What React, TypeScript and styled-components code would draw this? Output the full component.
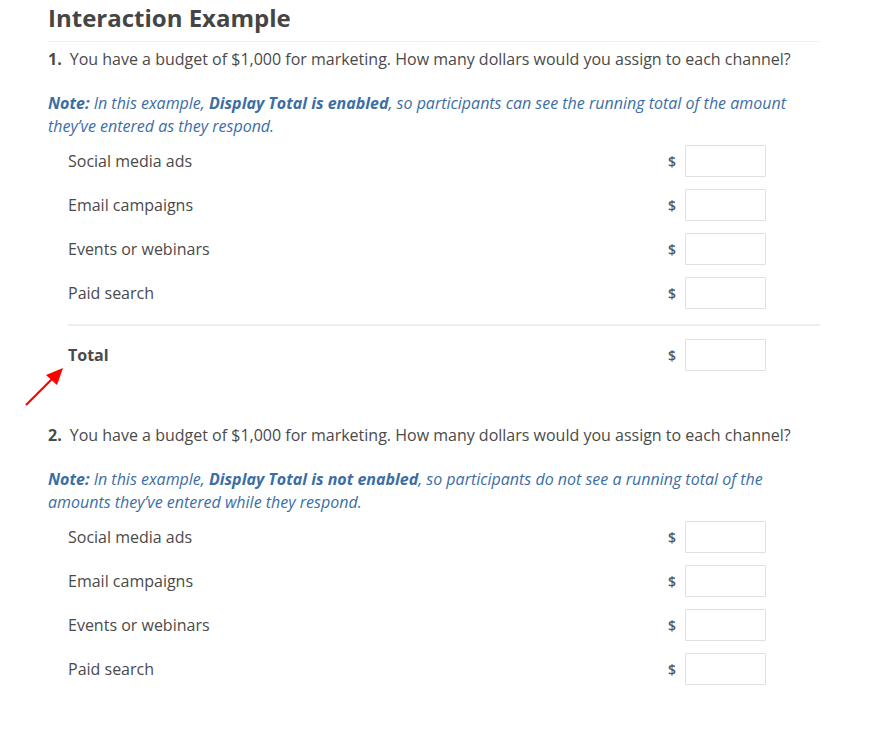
import React from 'react';
import styled, { createGlobalStyle } from 'styled-components';

const GlobalStyle = createGlobalStyle`
  body {
    margin: 0;
    background: #fff;
    font-family: "Open Sans", "Liberation Sans", sans-serif;
    color: #4a4a4a;
  }
`;

const Page = styled.div`
  width: 772px;
  padding: 0 0 40px 48px;
`;

const Heading = styled.h1`
  margin: 0;
  padding: 3px 0 8px;
  font-size: 24px;
  line-height: 30px;
  font-weight: 700;
  color: #454545;
  border-bottom: 1px solid #f2f2f2;
`;

const Question = styled.p<{ $top: number }>`
  margin: ${(p) => p.$top}px 0 0;
  font-size: 16px;
  line-height: 22px;
  color: #4a4a4a;
  b {
    font-weight: 700;
    margin-right: 8px;
  }
`;

const Note = styled.p`
  margin: 22px 0 0;
  font-size: 16px;
  line-height: 22.5px;
  font-style: italic;
  color: #3b6ea5;
  b {
    font-weight: 700;
  }
`;

const Rows = styled.div`
  margin: 2px 0 0 20px;
  display: flex;
  flex-direction: column;
`;

const Row = styled.div`
  position: relative;
  height: 44px;
  display: flex;
  align-items: center;
  padding-right: 54px;
`;

const Label = styled.span<{ $bold?: boolean }>`
  flex: 1;
  font-size: 16px;
  font-weight: ${(p) => (p.$bold ? 700 : 400)};
  color: #4a4a4a;
`;

const Dollar = styled.span`
  font-size: 14px;
  font-weight: 600;
  color: #555;
  margin-right: 9px;
`;

const Field = styled.input`
  box-sizing: border-box;
  width: 81px;
  height: 32px;
  border: 1px solid #e0e0e0;
  border-radius: 1px;
  padding: 0 6px;
  font: inherit;
`;

const Divider = styled.hr`
  margin: 9px 0 7px;
  border: 0;
  border-top: 2px solid #eeeeee;
  height: 0;
`;

const Arrow = styled.svg`
  position: absolute;
  left: -46px;
  top: 34px;
  overflow: visible;
`;

const channels = ['Social media ads', 'Email campaigns', 'Events or webinars', 'Paid search'];

const Entry = ({ label, bold, children }: { label: string; bold?: boolean; children?: React.ReactNode }) => (
  <Row>
    {children}
    <Label $bold={bold}>{label}</Label>
    <Dollar>$</Dollar>
    <Field type="text" />
  </Row>
);

export default function App() {
  return (
    <>
      <GlobalStyle />
      <Page>
        <Heading>Interaction Example</Heading>

        <Question $top={6}>
          <b>1.</b>You have a budget of $1,000 for marketing. How many dollars would you assign to each channel?
        </Question>
        <Note>
          <b>Note:</b> In this example, <b>Display Total is enabled</b>, so participants can see the running total of the amount they’ve entered as they respond.
        </Note>
        <Rows>
          {channels.map((c) => (
            <Entry key={c} label={c} />
          ))}
          <Divider />
          <Entry label="Total" bold>
            <Arrow width="40" height="40" viewBox="0 0 40 40">
              <line x1="4" y1="38" x2="32" y2="10" stroke="#ff0000" strokeWidth="2.2" />
              <polygon points="41,1 35,18 24,8" fill="#ff0000" />
            </Arrow>
          </Entry>
        </Rows>

        <Question $top={47}>
          <b>2.</b>You have a budget of $1,000 for marketing. How many dollars would you assign to each channel?
        </Question>
        <Note>
          <b>Note:</b> In this example, <b>Display Total is not enabled</b>, so participants do not see a running total of the amounts they’ve entered while they respond.
        </Note>
        <Rows>
          {channels.map((c) => (
            <Entry key={c} label={c} />
          ))}
        </Rows>
      </Page>
    </>
  );
}
